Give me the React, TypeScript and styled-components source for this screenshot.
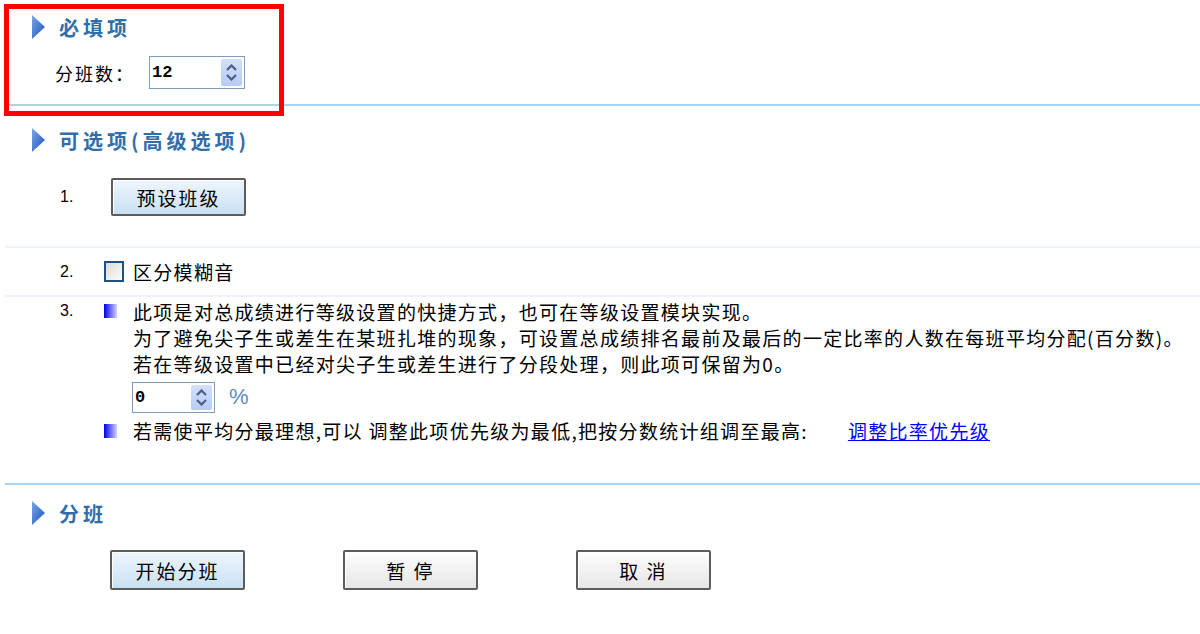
import React, { useState } from "react";
import styled, { createGlobalStyle } from "styled-components";

const GlobalStyle = createGlobalStyle`
  body {
    margin: 0;
    background: #ffffff;
    font-family: "Noto Sans CJK SC", "Liberation Sans", sans-serif;
    color: #000000;
  }
`;

const Page = styled.div`
  position: relative;
  width: 1195px;
  height: 634px;
  padding-left: 5px;
  overflow: hidden;
`;

// red annotation frame lying over the first section
const Highlight = styled.div`
  position: absolute;
  left: 4px;
  top: 4px;
  width: 270px;
  height: 102px;
  border: 5px solid #ff0000;
  pointer-events: none;
`;

const Section = styled.div<{ $top: number }>`
  padding-top: ${(p) => p.$top}px;
`;

const SectionHeader = styled.div`
  display: flex;
  align-items: center;
  gap: 13px;
  height: 26px;
  padding-left: 26px;
  font-size: 20px;
  font-weight: 700;
  letter-spacing: 4px;
  color: #2f6eaa;
`;

const Divider = styled.div<{ $strong?: boolean; $top: number }>`
  height: 2px;
  margin-top: ${(p) => p.$top}px;
  background: ${(p) => (p.$strong ? "#a7d6f4" : "#edf3f9")};
`;

const FieldRow = styled.div`
  display: flex;
  align-items: center;
  gap: 14px;
  margin-top: 16px;
  padding-left: 50px;
  font-size: 18px;
  letter-spacing: 2px;
`;

const SpinBox = styled.div<{ $w: number; $h: number }>`
  display: flex;
  align-items: center;
  justify-content: space-between;
  box-sizing: border-box;
  width: ${(p) => p.$w}px;
  height: ${(p) => p.$h}px;
  padding: 2px;
  border: 1px solid #7f9db9;
  background: #ffffff;
  font-family: "Liberation Mono", monospace;
  font-size: 17px;
  font-weight: 700;
  letter-spacing: 0;
  color: #000000;
`;

const SpinButton = styled.div`
  display: flex;
  flex-direction: column;
  align-items: center;
  justify-content: center;
  gap: 3px;
  width: 21px;
  height: 100%;
  border-radius: 2px;
  background: linear-gradient(#d3e0fb, #b7cbf5);
`;

const Row = styled.div<{ $top: number }>`
  display: flex;
  align-items: center;
  margin-top: ${(p) => p.$top}px;
  font-size: 19px;
  letter-spacing: 1.3px;
`;

const Num = styled.span`
  width: 44px;
  padding-left: 55px;
  font-family: "Liberation Sans", sans-serif;
  font-size: 16px;
  letter-spacing: 0;
`;

const Button = styled.button<{ $tone: "blue" | "gray"; $h?: number }>`
  width: 135px;
  height: ${(p) => p.$h ?? 40}px;
  border: 2px solid #5c5c5c;
  border-radius: 2px;
  background: ${(p) =>
    p.$tone === "blue"
      ? "linear-gradient(#eef6fd, #c9e0f3)"
      : "linear-gradient(#fdfdfd, #e6e6e6)"};
  box-shadow: inset 1px 1px 0 #ffffff;
  font-family: "Noto Sans CJK SC", sans-serif;
  font-size: 19px;
  letter-spacing: 2px;
  color: #000000;
  padding: 0;
  cursor: pointer;
`;

const CheckLabel = styled.label`
  display: flex;
  align-items: center;
  gap: 9px;
`;

const CheckBox = styled.span<{ $on: boolean }>`
  box-sizing: border-box;
  width: 20px;
  height: 21px;
  border: 2px solid #1c5180;
  background: ${(p) => (p.$on ? "#1c5180" : "linear-gradient(135deg, #dcdcd6, #fbfbf9)")};
`;

const Bullet = styled.span`
  flex: none;
  width: 13px;
  height: 14px;
  background: linear-gradient(90deg, #0000f0, #d2d2ff);
`;

const Notes = styled.div`
  display: flex;
  flex-direction: column;
`;

const NoteLine = styled.div`
  display: flex;
  align-items: center;
  gap: 16px;
  height: 26.5px;
  white-space: nowrap;
`;

const Indent = styled.div`
  padding-left: 29px;
  white-space: nowrap;
  height: 26.5px;
  line-height: 26.5px;
`;

const PercentRow = styled.div`
  display: flex;
  align-items: center;
  gap: 14px;
  padding-left: 28px;
  margin-top: 4px;
  margin-bottom: 5px;
`;

const Percent = styled.span`
  font-family: "Liberation Sans", sans-serif;
  font-size: 22px;
  color: #5b8cc0;
`;

const Link = styled.a`
  margin-left: 40px;
  color: #0000ff;
  text-decoration: underline;
  letter-spacing: 1.3px;
`;

const ButtonRow = styled.div`
  display: flex;
  gap: 98px;
  margin-top: 24px;
  padding-left: 105px;
`;

const Arrow: React.FC = () => (
  <svg width="15" height="26" viewBox="0 0 15 26">
    <defs>
      <linearGradient id="tri" x1="0" y1="0" x2="1" y2="1">
        <stop offset="0" stopColor="#7aa8ec" />
        <stop offset="1" stopColor="#1a4fb8" />
      </linearGradient>
    </defs>
    <path d="M1 1 L14 13 L1 25 Z" fill="url(#tri)" />
  </svg>
);

const Chevron: React.FC<{ up?: boolean }> = ({ up }) => (
  <svg width="11" height="7" viewBox="0 0 11 7">
    <path
      d={up ? "M1 6 L5.5 1.5 L10 6" : "M1 1 L5.5 5.5 L10 1"}
      fill="none"
      stroke="#4a5f86"
      strokeWidth="2.2"
    />
  </svg>
);

const Spinner: React.FC<{ value: string; w: number; h: number }> = ({ value, w, h }) => (
  <SpinBox $w={w} $h={h}>
    <span>{value}</span>
    <SpinButton>
      <Chevron up />
      <Chevron />
    </SpinButton>
  </SpinBox>
);

const App: React.FC = () => {
  const [fuzzy, setFuzzy] = useState(false);

  return (
    <Page>
      <GlobalStyle />
      <Highlight />

      <Section $top={14}>
        <SectionHeader>
          <Arrow />
          必填项
        </SectionHeader>
        <FieldRow>
          <span>分班数：</span>
          <Spinner value="12" w={96} h={33} />
        </FieldRow>
      </Section>

      <Divider $strong $top={15} />

      <Section $top={21}>
        <SectionHeader>
          <Arrow />
          可选项(高级选项)
        </SectionHeader>
        <Row $top={25}>
          <Num>1.</Num>
          <Button $tone="blue" $h={38} style={{ marginLeft: 7 }}>预设班级</Button>
        </Row>
      </Section>

      <Divider $top={30} />

      <Row $top={10}>
        <Num>2.</Num>
        <CheckLabel onClick={() => setFuzzy((prev) => !prev)}>
          <CheckBox $on={fuzzy} />
          区分模糊音
        </CheckLabel>
      </Row>

      <Divider $top={10} />

      <Row $top={1} style={{ alignItems: "flex-start" }}>
        <Num style={{ lineHeight: "26.5px" }}>3.</Num>
        <Notes>
          <NoteLine>
            <Bullet />
            此项是对总成绩进行等级设置的快捷方式，也可在等级设置模块实现。
          </NoteLine>
          <Indent>为了避免尖子生或差生在某班扎堆的现象，可设置总成绩排名最前及最后的一定比率的人数在每班平均分配(百分数)。</Indent>
          <Indent>若在等级设置中已经对尖子生或差生进行了分段处理，则此项可保留为0。</Indent>
          <PercentRow>
            <Spinner value="0" w={83} h={31} />
            <Percent>%</Percent>
          </PercentRow>
          <NoteLine>
            <Bullet />
            <span>
              若需使平均分最理想,可以 调整此项优先级为最低,把按分数统计组调至最高:
              <Link href="#">调整比率优先级</Link>
            </span>
          </NoteLine>
        </Notes>
      </Row>

      <Divider $strong $top={39} />

      <Section $top={15}>
        <SectionHeader>
          <Arrow />
          分班
        </SectionHeader>
        <ButtonRow>
          <Button $tone="blue">开始分班</Button>
          <Button $tone="gray">暂 停</Button>
          <Button $tone="gray">取 消</Button>
        </ButtonRow>
      </Section>
    </Page>
  );
};

export default App;
